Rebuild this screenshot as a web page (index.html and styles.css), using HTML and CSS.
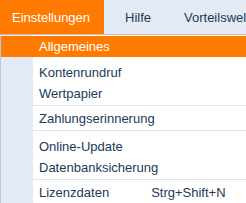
FILE: index.html
```html
<!DOCTYPE html>
<html lang="de">
<head>
<meta charset="utf-8">
<link rel="stylesheet" href="styles.css">
</head>
<body>
<div class="menubar">
  <div class="top active">Einstellungen</div>
  <div class="top help">Hilfe</div>
  <div class="top">Vorteilswelt</div>
</div>
<div class="dropdown">
  <div class="item hl"><span class="label">Allgemeines</span></div>
  <div class="spacer"></div>
  <div class="item"><span class="label">Kontenrundruf</span></div>
  <div class="item"><span class="label">Wertpapier</span></div>
  <div class="sep"></div>
  <div class="item"><span class="label">Zahlungserinnerung</span></div>
  <div class="sep wide"></div>
  <div class="item"><span class="label">Online-Update</span></div>
  <div class="item"><span class="label">Datenbanksicherung</span></div>
  <div class="sep"></div>
  <div class="item"><span class="label">Lizenzdaten</span><span class="key">Strg+Shift+N</span></div>
</div>
</body>
</html>
```
FILE: styles.css
```css
html, body {
  margin: 0;
  padding: 0;
  width: 246px;
  height: 203px;
  overflow: hidden;
  background: #ffffff;
  font-family: "Liberation Sans", Arial, sans-serif;
  font-size: 13px;
}
.menubar {
  display: flex;
  height: 34px;
  background: #e3eaf3;
  white-space: nowrap;
  overflow: hidden;
}
.top {
  display: flex;
  align-items: center;
  padding: 0 11px;
  color: #1b3a5a;
  flex: none;
}
.top.active {
  background: #ff7a00;
  color: #ffffff;
  padding-left: 12px;
  width: 81px;
}
.top.help {
  padding-left: 21px;
  padding-right: 22px;
}
.dropdown {
  border-top: 1px solid #dcb894;
  border-left: 1px solid #b8c9e0;
  background: linear-gradient(to right, #e3eaf5 0, #e3eaf5 32px, #ffffff 32px);
  height: 168px;
}
.item {
  display: flex;
  align-items: center;
  height: 21px;
  padding-left: 38px;
  color: #1b3a5a;
  white-space: nowrap;
}
.item.hl {
  background: #ff7a00;
  color: #ffffff;
  margin-top: 1px;
}
.spacer {
  height: 5px;
}
.sep {
  height: 1px;
  background: #dde3ea;
  margin: 1px 0 2px 32px;
}
.sep.wide {
  margin-bottom: 5px;
}
.key {
  margin-left: 42px;
}
```
